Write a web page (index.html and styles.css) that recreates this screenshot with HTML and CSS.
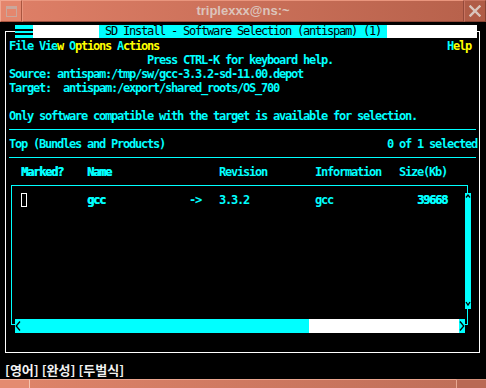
FILE: index.html
```html
<!DOCTYPE html>
<html>
<head>
<meta charset="utf-8">
<title>triplexxx@ns:~</title>
<link rel="stylesheet" href="styles.css">
</head>
<body>
<div class="window">
  <div class="titlebar">
    <div class="tb-btn tb-menu">
      <svg width="11" height="11" viewBox="0 0 11 11"><rect x="0.5" y="0.5" width="10" height="10" fill="none" stroke="#caa79c"/><rect x="1" y="1" width="9" height="2" fill="#caa79c"/></svg>
    </div>
    <div class="tb-title">triplexxx@ns:~</div>
    <div class="tb-btn tb-close">
      <svg width="12" height="12" viewBox="0 0 12 12"><path d="M1.5 1.5 L10.5 10.5 M10.5 1.5 L1.5 10.5" stroke="#d9c6be" stroke-width="2.4" stroke-linecap="square"/></svg>
    </div>
  </div>
  <div class="term">
    <div class="frame">
      <div class="titlerow"><span class="ticon"></span><span class="tfill w1"></span><span class="ttext"> SD Install - Software Selection (antispam) (1) </span><span class="tfill w2"></span></div>
      <div class="line"><span class="c">File Vie</span><span class="y">w</span> <span class="c">O</span><span class="y">ptions</span> <span class="c">A</span><span class="y">ctions</span>                                                <span class="c">H</span><span class="y">elp</span></div>
      <div class="line">                       Press CTRL-K for keyboard help.</div>
      <div class="line">Source: antispam:/tmp/sw/gcc-3.3.2-sd-11.00.depot</div>
      <div class="line">Target:  antispam:/export/shared_roots/OS_700</div>
      <div class="line"></div>
      <div class="line">Only software compatible with the target is available for selection.</div>
      <div class="rule"></div>
      <div class="line">Top (Bundles and Products)                                     0 of 1 selected</div>
      <div class="rule"></div>
      <div class="line">  <span class="hb">Marked?</span>    <span class="hb">Name</span>                  Revision        Information   Size(Kb)</div>
      <div class="listbox">
        <div class="line row"><span class="chk"></span>          <span class="hb">gcc</span>              -&gt;   3.3.2           gcc              <span class="hb">39668</span></div>
        <div class="vscroll">
          <svg class="va-up" width="6" height="6" viewBox="0 0 6 6"><path d="M1 4.5 L3 2 L5 4.5" fill="none" stroke="#000" stroke-width="1.3"/></svg>
          <svg class="va-down" width="6" height="8" viewBox="0 0 6 8"><path d="M1 2 L3 5 L5 2" fill="none" stroke="#000" stroke-width="1.3"/></svg>
        </div>
        <div class="hscroll">
          <div class="hs-thumb"><svg width="6" height="14" viewBox="0 0 6 14"><path d="M5 2.5 L1.2 7 L5 11.5" fill="none" stroke="#000" stroke-width="1.3"/></svg></div>
          <div class="hs-track"></div>
          <div class="hs-end"><svg width="6" height="14" viewBox="0 0 6 14"><path d="M1 2.5 L4.8 7 L1 11.5" fill="none" stroke="#000" stroke-width="1.3"/></svg></div>
        </div>
      </div>
    </div>
    <div class="status">[영어] [완성] [두벌식]</div>
  </div>
  <div class="bottombar"><span class="bb-left"></span><span class="bb-mid"></span><span class="bb-right"></span></div>
</div>
</body>
</html>
```
FILE: styles.css
```css
* { box-sizing: border-box; }
html, body { margin: 0; padding: 0; background: #000; }
body { width: 486px; height: 388px; overflow: hidden; }

.window { width: 486px; height: 388px; display: flex; flex-direction: column; }

.titlebar { display: flex; height: 22px; flex: none; }
.tb-btn { width: 22px; height: 22px; display: flex; align-items: center; justify-content: center; border: 1px solid; }
.tb-menu { background: #e4866d; border-color: #f1a690 #a9553f #a9553f #f1a690; }
.tb-title {
  flex: 1;
  background: linear-gradient(to right, #dd7e66, #b8624c);
  border: 1px solid;
  border-color: #e9957d #94493a #94493a #e9957d;
  color: #dcc4bb;
  font: bold 13px/20px "Liberation Sans", Arial, sans-serif;
  text-align: center;
}
.tb-close { background: #b05c47; border-color: #c87461 #864333 #864333 #c87461; }

.term { height: 357px; flex: none; padding-top: 9px; background: #000; }

.frame {
  margin-left: 5px;
  width: 475px;
  height: 322px;
  border: 1px solid #fff;
  font-family: "DejaVu Sans Mono", monospace;
  font-weight: bold;
  font-size: 12px;
  letter-spacing: -1.225px;
  color: #00ffff;
}

.titlerow { display: flex; height: 13px; width: 462px; margin: -7px 0 1px 9px; line-height: 13px; }
.ticon {
  width: 18px;
  background: linear-gradient(to bottom, #00ffff 0 4px, #000 4px 6px, #00ffff 6px 8px, #000 8px 10px, #00ffff 10px);
}
.tfill { background: #fff; }
.w1 { width: 66px; }
.w2 { flex: 1; }
.ttext { width: 288px; background: #00ffff; color: #000; white-space: pre; font-weight: normal; }

.line { height: 14px; line-height: 14px; padding-left: 3px; white-space: pre; }
.c { color: #00ffff; }
.y { color: #ffff00; }
.hb { text-shadow: 0.6px 0 0 #00ffff; }

.rule { height: 7px; margin: 0 3px 7px; border-bottom: 1px solid #00ffff; }

.listbox {
  position: relative;
  margin: 6px 0 0 5px;
  width: 457px;
  height: 140px;
  border: 1px solid #00ffff;
  padding: 7px 0 0 9px;
}
.row { padding-left: 0; }
.chk { display: inline-block; width: 6px; height: 14px; border: 1px solid #fff; vertical-align: top; }

.vscroll {
  position: absolute;
  left: 453px;
  top: 7px;
  width: 6px;
  height: 116px;
  background: #00ffff;
  display: flex;
  flex-direction: column;
  justify-content: space-between;
}
.va-down { margin-bottom: 1px; }

.hscroll { position: absolute; left: 3px; top: 133px; width: 450px; height: 14px; display: flex; }
.hs-thumb { width: 294px; background: #00ffff; }
.hs-thumb svg, .hs-end svg { display: block; }
.hs-track { width: 150px; background: #fff; }
.hs-end { width: 6px; background: #00ffff; }

.status {
  margin: 10px 0 0 5px;
  height: 14px;
  font: 600 13px/14px "Noto Sans CJK KR", "Noto Sans", sans-serif;
  color: #f2f2f2;
}

.bottombar { display: flex; height: 9px; flex: none; }
.bb-left { width: 30px; background: #e48b71; border-top: 1px solid #f4b39e; border-right: 1px solid #f6c6b1; }
.bb-mid { flex: 1; background: linear-gradient(to right, #dd8369, #c06f59); border-top: 1px solid #eca58f; }
.bb-right { width: 30px; background: #b96954; border-top: 1px solid #d58f7a; border-left: 1px solid #e8a892; }
```
